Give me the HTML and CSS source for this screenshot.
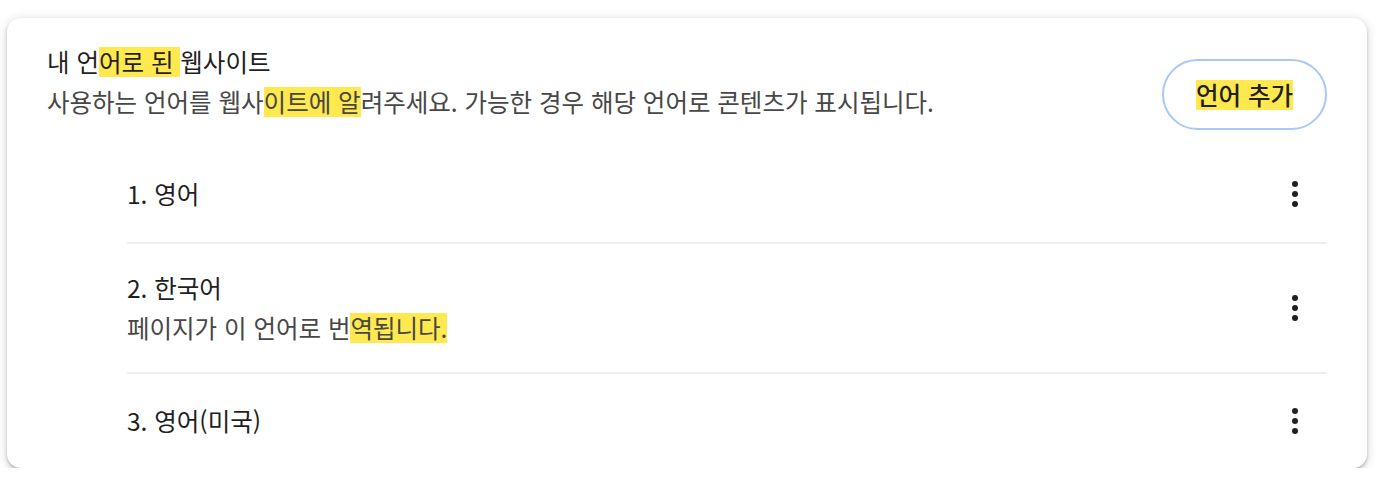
FILE: index.html
```html
<!DOCTYPE html>
<html lang="ko">
<head>
  <meta charset="UTF-8">
  <title>언어</title>
  <link rel="stylesheet" href="styles.css">
</head>
<body>

  <div class="card">
    <div class="card-head">
      <div class="head-text">
        <div class="title">내 언<mark>어로 된 </mark>웹사이트</div>
        <div class="sub">사용하는 언어를 웹사<mark>이트에 알</mark>려주세요. 가능한 경우 해당 언어로 콘텐츠가 표시됩니다.</div>
      </div>
      <button class="add-btn"><mark>언어 추가</mark></button>
    </div>

    <div class="lang-list">
      <div class="lang-row">
        <div class="lang-text">
          <div class="lang-name">1. 영어</div>
        </div>
        <button class="more" aria-label="더보기"><span></span><span></span><span></span></button>
      </div>
      <div class="lang-row">
        <div class="lang-text">
          <div class="lang-name">2. 한국어</div>
          <div class="lang-desc">페이지가 이 언어로 번<mark>역됩니다.</mark></div>
        </div>
        <button class="more" aria-label="더보기"><span></span><span></span><span></span></button>
      </div>
      <div class="lang-row">
        <div class="lang-text">
          <div class="lang-name">3. 영어(미국)</div>
        </div>
        <button class="more" aria-label="더보기"><span></span><span></span><span></span></button>
      </div>
    </div>
  </div>

</body>
</html>
```

FILE: styles.css
```css
body {
  margin: 0;
  background: #fff;
  font-family: 'Noto Sans CJK KR', 'Noto Sans', sans-serif;
  color: #1f1f1f;
}
mark {
  color: inherit;
  background: linear-gradient(transparent 3px, #ffe94f 3px, #ffe94f calc(100% - 2px), transparent calc(100% - 2px));
}
.card {
  width: 1360px;
  margin: 18px 0 0 7px;
  padding: 24px 40px 0;
  box-sizing: border-box;
  background: #fff;
  border-radius: 14px;
  box-shadow: 0 2px 3px rgba(60, 64, 67, .3), 0 2px 8px 2px rgba(60, 64, 67, .15);
}
.card-head {
  display: flex;
  align-items: center;
  justify-content: space-between;
}
.head-text {
  padding-bottom: 24px;
  font-size: 24.5px;
  line-height: 40px;
}
.title { color: #1f1f1f; }
.sub { color: #474747; }
.add-btn {
  width: 165px;
  height: 71px;
  border: 2px solid #a8c7fa;
  border-radius: 36px;
  background: #fff;
  font-family: inherit;
  font-size: 24.5px;
  font-weight: 500;
  color: #1f1f1f;
  cursor: pointer;
}
.lang-list {
  margin-left: 80px;
}
.lang-row {
  display: flex;
  align-items: center;
  min-height: 96px;
  padding: 24px 0;
  box-sizing: border-box;
  border-top: 2px solid #eeeeee;
  font-size: 24.5px;
  line-height: 40px;
}
.lang-row:first-child { border-top: none; }
.lang-text { flex: 1; }
.lang-desc { color: #474747; }
.more {
  display: flex;
  flex-direction: column;
  align-items: center;
  gap: 4px;
  width: 40px;
  padding: 0;
  margin-right: 12px;
  border: none;
  background: none;
  cursor: pointer;
}
.more span {
  width: 6px;
  height: 6px;
  border-radius: 50%;
  background: #1f1f1f;
}
```
